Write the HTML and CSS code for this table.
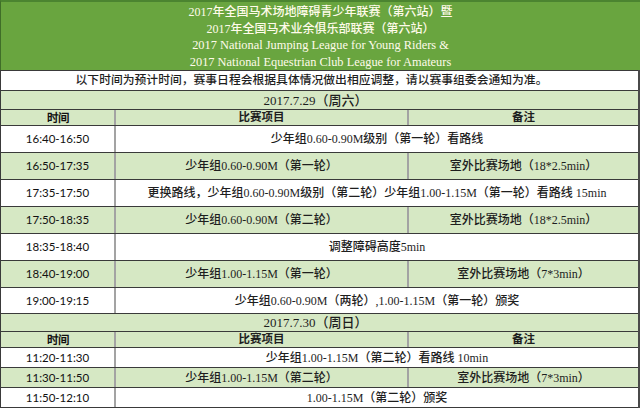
FILE: index.html
```
<!DOCTYPE html>
<html lang="zh-CN">
<head>
<meta charset="utf-8">
<title>2017 National Jumping League schedule</title>
<link rel="stylesheet" href="styles.css">
</head>
<body>
<div class="page">
  <header class="banner">
    <div class="tline">2017年全国马术场地障碍青少年联赛（第六站）暨</div>
    <div class="tline">2017年全国马术业余俱乐部联赛（第六站）</div>
    <div class="tline en">2017 National Jumping League for Young Riders &amp;</div>
    <div class="tline en">2017 National Equestrian Club League for Amateurs</div>
  </header>
  <div class="sched">
    <div class="row note"><div class="c full">以下时间为预计时间，赛事日程会根据具体情况做出相应调整，请以赛事组委会通知为准。</div></div>
    <div class="row date h19 g"><div class="c full">2017.7.29（周六）</div></div>
    <div class="row head h16 g"><div class="c t">时间</div><div class="c">比赛项目</div><div class="c">备注</div></div>
    <div class="row h27"><div class="c t">16:40-16:50</div><div class="c span">少年组0.60-0.90M级别（第一轮）看路线</div></div>
    <div class="row h27 g"><div class="c t">16:50-17:35</div><div class="c">少年组0.60-0.90M（第一轮）</div><div class="c">室外比赛场地（18*2.5min）</div></div>
    <div class="row h27"><div class="c t">17:35-17:50</div><div class="c span">更换路线，少年组0.60-0.90M级别（第二轮）少年组1.00-1.15M（第一轮）看路线 15min</div></div>
    <div class="row h27 g"><div class="c t">17:50-18:35</div><div class="c">少年组0.60-0.90M（第二轮）</div><div class="c">室外比赛场地（18*2.5min）</div></div>
    <div class="row h27"><div class="c t">18:35-18:40</div><div class="c span">调整障碍高度5min</div></div>
    <div class="row h27 g"><div class="c t">18:40-19:00</div><div class="c">少年组1.00-1.15M（第一轮）</div><div class="c">室外比赛场地（7*3min）</div></div>
    <div class="row h26"><div class="c t">19:00-19:15</div><div class="c span">少年组0.60-0.90M（两轮）,1.00-1.15M（第一轮）颁奖</div></div>
    <div class="row date h18 g"><div class="c full">2017.7.30（周日）</div></div>
    <div class="row head h16 g"><div class="c t">时间</div><div class="c">比赛项目</div><div class="c">备注</div></div>
    <div class="row h20"><div class="c t">11:20-11:30</div><div class="c span">少年组1.00-1.15M（第二轮）看路线 10min</div></div>
    <div class="row h20 g"><div class="c t">11:30-11:50</div><div class="c">少年组1.00-1.15M（第二轮）</div><div class="c">室外比赛场地（7*3min）</div></div>
    <div class="row h20 last"><div class="c t">11:50-12:10</div><div class="c span">1.00-1.15M（第二轮）颁奖</div></div>
  </div>
</div>
</body>
</html>
```
FILE: styles.css
```
* { box-sizing: border-box; }
html, body { margin: 0; padding: 0; background: #ffffff; }
.page {
  width: 640px;
  height: 408px;
  overflow: hidden;
  font-family: "Liberation Serif", "Noto Sans CJK SC", serif;
  color: #1e1e1e;
}
.banner {
  height: 70px;
  background: #69a53f;
  border-top: 2px solid #4b8430;
  border-left: 1px solid #3f6e28;
  padding-top: 2px;
  color: #fffbea;
  font-size: 12px;
  font-weight: 500;
  line-height: 16.5px;
  text-align: center;
}
.tline { white-space: nowrap; }
.tline.en { font-size: 12.4px; }
.sched {
  border-left: 1px solid #3a3a3a;
  border-right: 2px solid #4a4a4a;
}
.row {
  display: grid;
  grid-template-columns: 113px 293px 1fr;
  border-top: 1px solid #3a3a3a;
  font-size: 12px;
  font-weight: 500;
}
.row.g { background: #d6e8c4; }
.row.last { border-bottom: 1px solid #3a3a3a; height: 21px; }
.note { height: 20px; }
.h16 { height: 16px; }
.h18 { height: 18px; }
.h19 { height: 19px; }
.h20 { height: 20px; }
.h26 { height: 26px; }
.h27 { height: 27px; }
.c {
  display: flex;
  align-items: center;
  justify-content: center;
  white-space: nowrap;
  border-left: 2px solid #a3a3a3;
  line-height: 1;
}
.c.t {
  border-left: none;
  font-family: "Lato", "Liberation Sans", sans-serif;
  font-size: 11.5px;
  font-weight: 400;
  color: #111;
}
.c.span { grid-column: 2 / 4; }
.c.full { grid-column: 1 / 4; border-left: none; }
.note .c.full { font-size: 11.8px; padding-right: 16px; }
.date .c.full { font-size: 13px; padding-right: 8px; }
.head .c { font-size: 11.5px; font-weight: bold; }
```
